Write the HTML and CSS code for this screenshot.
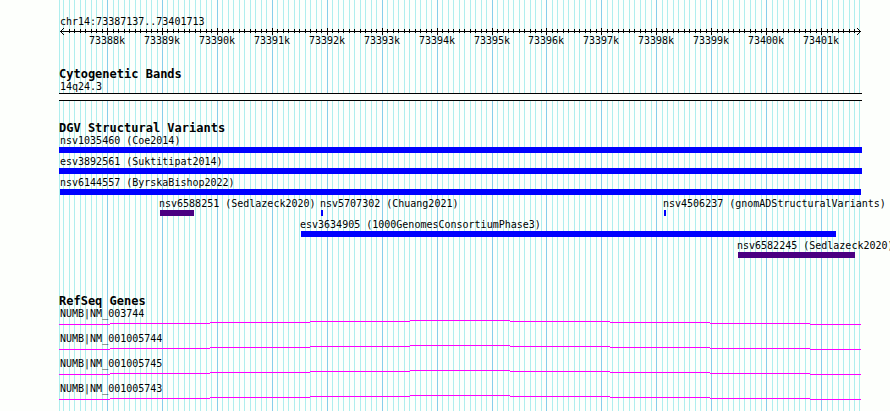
FILE: index.html
```
<!DOCTYPE html>
<html lang="en">
<head>
<meta charset="utf-8">
<title>chr14:73387137..73401713</title>
<link rel="stylesheet" href="styles.css">
</head>
<body>
<main class="browser">
  <svg class="gridlines" id="gridlines" aria-hidden="true"></svg>

  <header class="ruler">
    <div class="label">chr14:73387137..73401713</div>
    <svg class="axis" id="axis" aria-hidden="true">
      <rect x="1" y="3" width="99.8%" height="1"/>
      <path d="M1 3h1v1h-1zM2 2h1v1h-1zM3 1h1v1h-1zM4 0h1v1h-1zM2 4h1v1h-1zM3 5h1v1h-1zM4 6h1v1h-1z"/>
      <svg class="axis-end" x="100%"><path d="M-2 3h1v1h-1zM-3 2h1v1h-1zM-4 1h1v1h-1zM-5 0h1v1h-1zM-3 4h1v1h-1zM-4 5h1v1h-1zM-5 6h1v1h-1z"/></svg>
    </svg>
    <div class="ticks" id="ticks"></div>
  </header>

  <section class="track cytoband">
    <h2>Cytogenetic Bands</h2>
    <div class="label">14q24.3</div>
    <div class="band"></div>
  </section>

  <section class="track variants">
    <h2>DGV Structural Variants</h2>
    <div class="rows">
      <div class="row">
        <div class="feature clipped" style="--x:0;--w:803"><span class="label">nsv1035460 (Coe2014)</span><i class="bar"></i></div>
      </div>
      <div class="row">
        <div class="feature clipped" style="--x:0;--w:803"><span class="label">esv3892561 (Suktitipat2014)</span><i class="bar"></i></div>
      </div>
      <div class="row">
        <div class="feature wide" style="--x:1;--w:801"><span class="label">nsv6144557 (ByrskaBishop2022)</span><i class="bar"></i></div>
      </div>
      <div class="row">
        <div class="feature complex" style="--x:101;--w:34"><span class="label">nsv6588251 (Sedlazeck2020)</span><i class="bar"></i></div>
        <div class="feature" style="--x:262;--w:2"><span class="label">nsv5707302 (Chuang2021)</span><i class="bar"></i></div>
        <div class="feature" style="--x:605;--w:2"><span class="label">nsv4506237 (gnomADStructuralVariants)</span><i class="bar"></i></div>
      </div>
      <div class="row">
        <div class="feature" style="--x:242;--w:535"><span class="label">esv3634905 (1000GenomesConsortiumPhase3)</span><i class="bar"></i></div>
      </div>
      <div class="row">
        <div class="feature complex" style="--x:679;--w:117"><span class="label">nsv6582245 (Sedlazeck2020)</span><i class="bar"></i></div>
      </div>
    </div>
  </section>

  <section class="track genes">
    <h2>RefSeq Genes</h2>
    <div class="gene-list">
      <div class="gene"><div class="label">NUMB|NM_003744</div><svg class="intron" viewBox="0 0 803 5" preserveAspectRatio="none"><path d="M0 4h51v1h-51zM51 3h100v1h-100zM151 2h100v1h-100zM251 1h100v1h-100zM351 0h100v1h-100zM451 1h100v1h-100zM551 2h100v1h-100zM651 3h100v1h-100zM751 4h51v1h-51z"/></svg></div>
      <div class="gene"><div class="label">NUMB|NM_001005744</div><svg class="intron" viewBox="0 0 803 5" preserveAspectRatio="none"><path d="M0 4h51v1h-51zM51 3h100v1h-100zM151 2h100v1h-100zM251 1h100v1h-100zM351 0h100v1h-100zM451 1h100v1h-100zM551 2h100v1h-100zM651 3h100v1h-100zM751 4h51v1h-51z"/></svg></div>
      <div class="gene"><div class="label">NUMB|NM_001005745</div><svg class="intron" viewBox="0 0 803 5" preserveAspectRatio="none"><path d="M0 4h51v1h-51zM51 3h100v1h-100zM151 2h100v1h-100zM251 1h100v1h-100zM351 0h100v1h-100zM451 1h100v1h-100zM551 2h100v1h-100zM651 3h100v1h-100zM751 4h51v1h-51z"/></svg></div>
      <div class="gene"><div class="label">NUMB|NM_001005743</div><svg class="intron" viewBox="0 0 803 5" preserveAspectRatio="none"><path d="M0 4h51v1h-51zM51 3h100v1h-100zM151 2h100v1h-100zM251 1h100v1h-100zM351 0h100v1h-100zM451 1h100v1h-100zM551 2h100v1h-100zM651 3h100v1h-100zM751 4h51v1h-51z"/></svg></div>
    </div>
  </section>
</main>
<script src="script.js"></script>
</body>
</html>
```
FILE: styles.css
```
* {
  box-sizing: border-box;
}

body {
  margin: 0;
  background: #fdfffc;
  color: #000;
  font: 10px/13px "DejaVu Sans Mono", monospace;
  overflow-x: hidden;
}

.browser {
  position: relative;
  z-index: 0;
  min-height: 100vh;
  margin: 0 28px 0 59px;
  padding: 15px 0 10px;
}

svg {
  display: block;
  overflow: visible;
  shape-rendering: crispEdges;
}

/* Genome grid drawn behind every track */
.gridlines {
  position: absolute;
  z-index: -1;
  top: 0;
  left: 0;
  width: 100%;
  height: 100%;
}

.minor {
  fill: #afeeee;
}

.major {
  fill: #87ceeb;
}

h2 {
  margin: 0;
  font-size: 12px;
  line-height: 12px;
  font-weight: bold;
}

.label {
  display: block;
  padding-left: 1px;
  white-space: nowrap;
}

/* Ruler */
.axis {
  width: 100%;
  height: 7px;
}

.ticks {
  display: grid;
  line-height: 11px;
}

.tick {
  grid-area: 1 / 1;
  width: 36px;
  margin-left: calc(var(--x) * 100% / 803 - 18px);
  text-align: center;
}

/* Tracks */
.cytoband {
  margin-top: 22px;
}

.band {
  height: 8px;
  border: solid #000;
  border-width: 1px 0;
  background: #fdfffc;
}

.variants {
  margin-top: 21px;
}

.rows {
  display: grid;
  gap: 2px;
}

.row {
  display: grid;
}

.feature {
  grid-area: 1 / 1;
  width: calc(var(--w) * 100% / 803);
  margin-left: calc(var(--x) * 100% / 803);
}

.feature .label {
  margin-left: -1px;
  padding-left: 0;
}

.wide .label {
  margin-left: 0;
}

/* Features running past the left edge of the region */
.clipped .label {
  margin-left: 1px;
}

.bar {
  display: block;
  height: 6px;
  background: #00f;
}

.complex .bar {
  background: #4b0082;
}

.genes {
  margin-top: 37px;
}

.gene-list {
  display: grid;
  gap: 7px;
}

.intron {
  width: 100%;
  height: 5px;
  fill: #f0f;
}
```
FILE: script.js
```
// Plot units: 803 across the region, 100 bp per minor step.
const SPAN = 803;
const STEP = 5.4921;
const FIRST_MAJOR = 48.58;
const NS = "http://www.w3.org/2000/svg";
const grid = document.getElementById("gridlines");
const axis = document.getElementById("axis");
const ticks = document.getElementById("ticks");

function addRect(parent, x, y, height, className) {
  const rect = document.createElementNS(NS, "rect");
  rect.setAttribute("x", (x / SPAN) * 100 + "%");
  rect.setAttribute("y", y);
  rect.setAttribute("width", 1);
  rect.setAttribute("height", height);
  if (className) rect.setAttribute("class", className);
  parent.appendChild(rect);
}

for (let k = -9; k <= 137; k++) {
  const x = Math.max(0, Math.floor(FIRST_MAJOR + k * STEP));
  const major = k % 10 === 0;
  addRect(grid, x, 0, "100%", major ? "major" : "minor");
  // Leave room for the arrowheads at both ends of the axis.
  if (k > -8 && k < 137) {
    addRect(axis, x, major ? 0 : 1, major ? 7 : 4);
  }
  if (major) {
    const tick = document.createElement("span");
    tick.className = "tick";
    tick.style.setProperty("--x", x);
    tick.textContent = 73388 + k / 10 + "k";
    ticks.appendChild(tick);
  }
}
```
